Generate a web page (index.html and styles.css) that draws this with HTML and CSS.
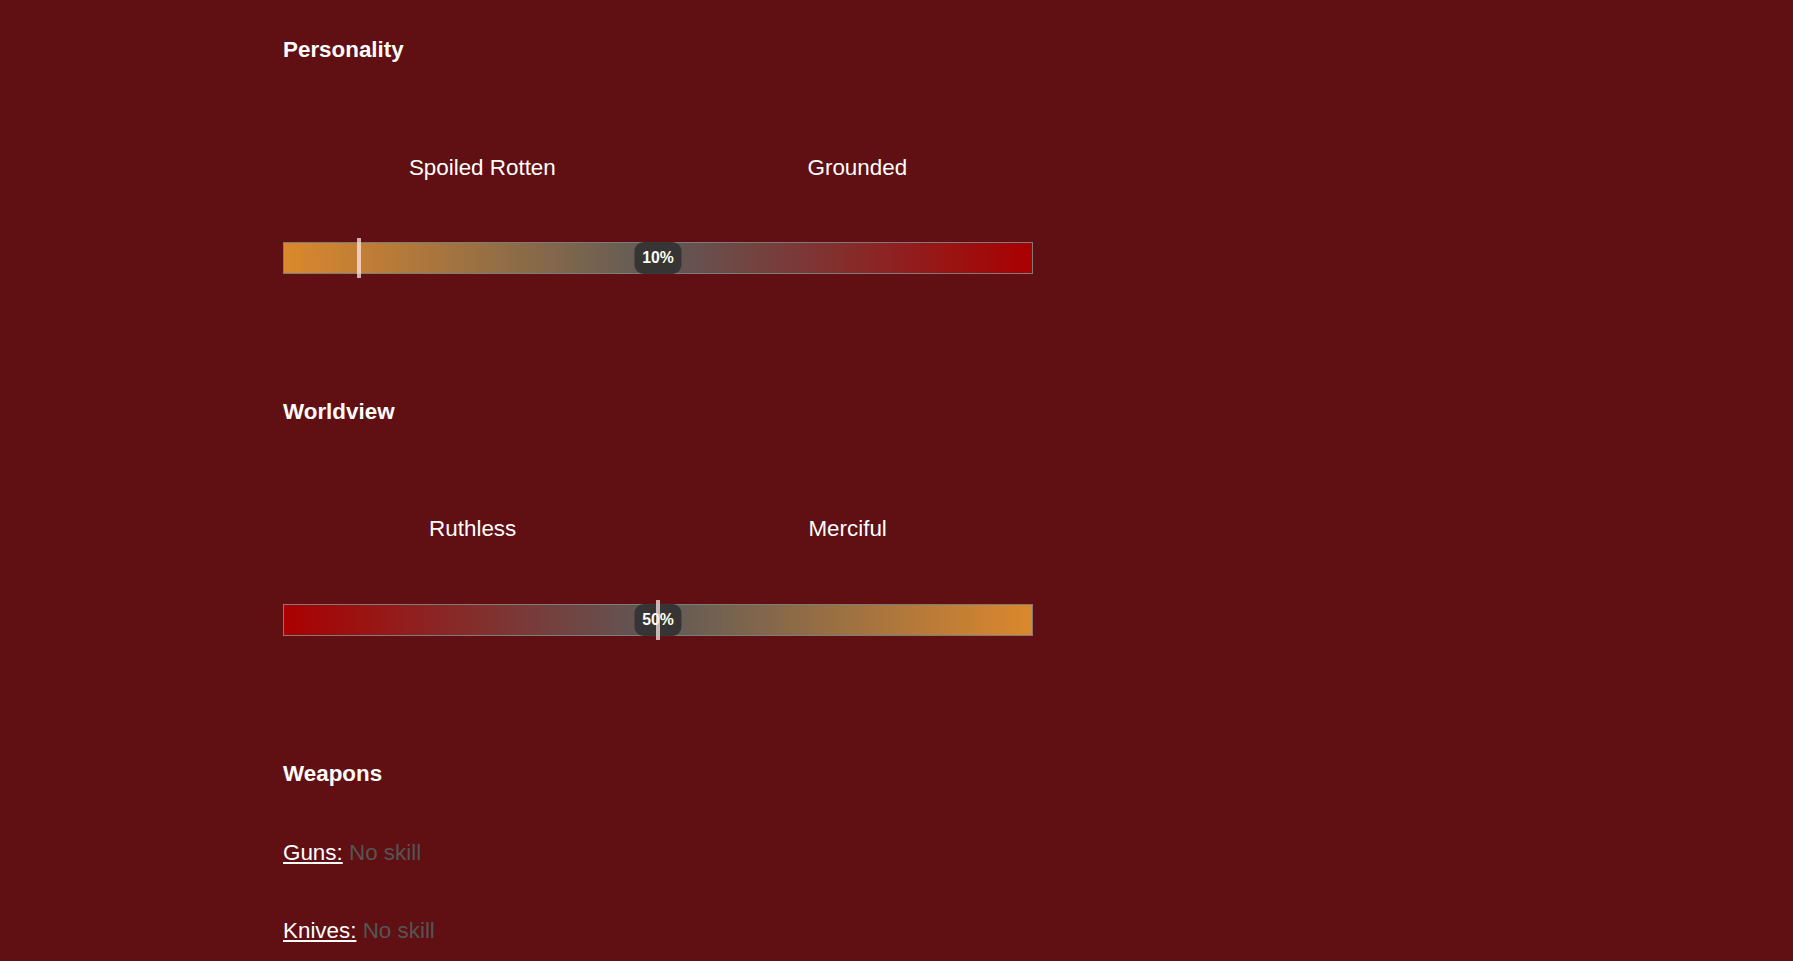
FILE: index.html
```html
<!DOCTYPE html>
<html lang="en">
<head>
<meta charset="utf-8">
<title>Character</title>
<link rel="stylesheet" href="styles.css">
</head>
<body>
<main class="sheet">
  <section class="trait">
    <h2 class="trait-title">Personality</h2>
    <div class="poles">
      <span class="pole">Spoiled Rotten</span>
      <span class="pole">Grounded</span>
    </div>
    <div class="slider slider-warm">
      <span class="badge">10%</span>
      <span class="thumb" style="left: 10%"></span>
    </div>
  </section>

  <section class="trait">
    <h2 class="trait-title">Worldview</h2>
    <div class="poles">
      <span class="pole">Ruthless</span>
      <span class="pole">Merciful</span>
    </div>
    <div class="slider slider-cool">
      <span class="badge">50%</span>
      <span class="thumb" style="left: 50%"></span>
    </div>
  </section>

  <section class="weapons">
    <h2 class="trait-title">Weapons</h2>
    <p class="skill"><u class="skill-name">Guns:</u> <span class="skill-level">No skill</span></p>
    <p class="skill"><u class="skill-name">Knives:</u> <span class="skill-level">No skill</span></p>
  </section>
</main>
</body>
</html>
```

FILE: styles.css
```css
html, body {
  margin: 0;
  padding: 0;
  background: #600f12;
}

body {
  font-family: "Liberation Sans", Arial, sans-serif;
  color: #ffffff;
  font-size: 22.4px;
  line-height: 26px;
}

.sheet {
  padding: 37px 0 0 283px;
  width: 750px;
}

.trait {
  margin: 0 0 124.5px 0;
}

.trait-title {
  margin: 0;
  font-size: 22.4px;
  line-height: 26px;
  font-weight: 700;
}

.poles {
  display: flex;
  justify-content: space-around;
  margin-top: 91.7px;
  height: 26px;
}

.pole {
  white-space: nowrap;
}

.slider {
  position: relative;
  margin-top: 61.6px;
  height: 30px;
  border: 1px solid #7c7c7c;
}

.slider-warm {
  background: linear-gradient(to right, #db882c, #5f5a57, #aa0000);
}

.slider-cool {
  background: linear-gradient(to right, #aa0000, #5f5a57, #db882c);
}

.badge {
  position: absolute;
  left: 50%;
  top: -1px;
  transform: translateX(-50%);
  width: 47px;
  height: 32px;
  border-radius: 9px;
  background: rgba(48, 48, 48, 0.88);
  color: #ffffff;
  font-size: 15.8px;
  font-weight: 700;
  line-height: 32px;
  text-align: center;
}

.thumb {
  position: absolute;
  top: -5px;
  width: 4px;
  height: 40px;
  margin-left: -2px;
  background: rgba(255, 235, 230, 0.72);
}

.weapons .trait-title {
  margin-bottom: 53.4px;
}

.skill {
  margin: 0 0 52.3px 0;
  font-size: 22.4px;
  line-height: 26px;
}

.skill-name {
  color: #ffffff;
  text-decoration: underline;
  text-underline-offset: 2px;
}

.skill-level {
  color: #555555;
}
```
